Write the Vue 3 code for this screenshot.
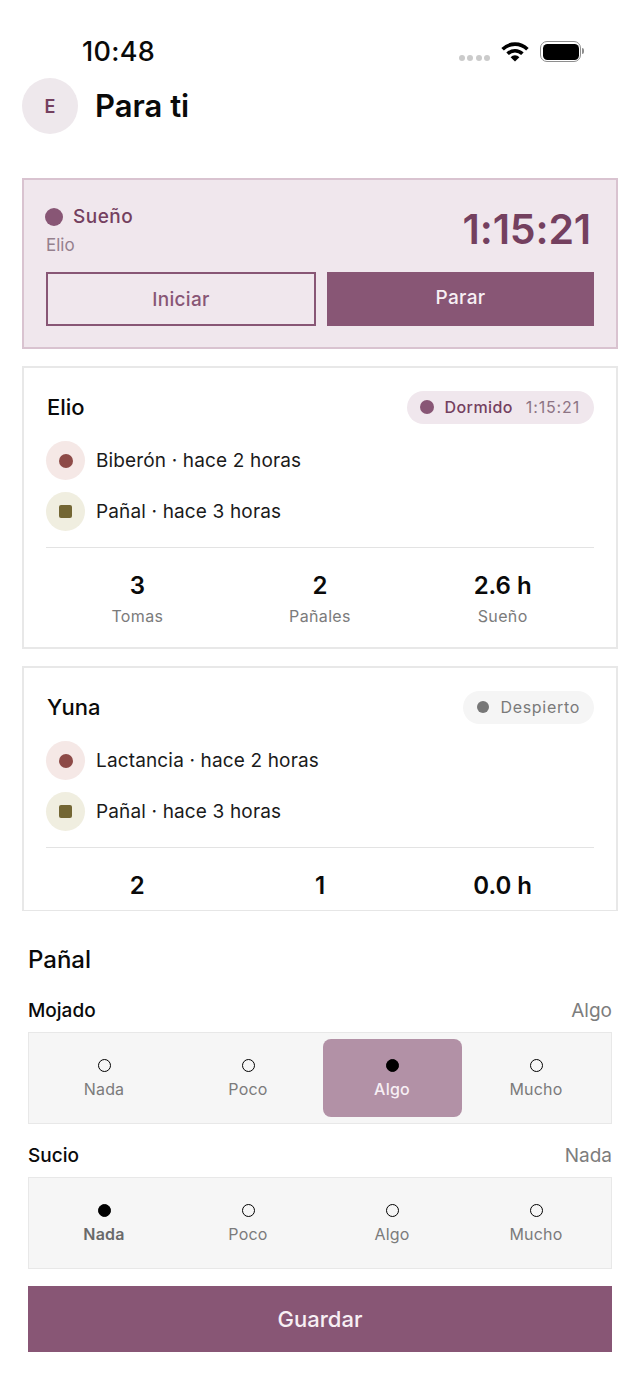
<template>
  <div class="screen">
    <div class="status-bar">
      <span class="clock">10:48</span>
      <div class="status-icons">
        <span class="signal"><i v-for="n in 4" :key="n"></i></span>
        <svg class="wifi" width="28" height="21" viewBox="0 0 28 21">
          <path d="M1.6 8.2a17.6 17.6 0 0 1 24.8 0" fill="none" stroke="#000" stroke-width="3.6" />
          <path d="M6.6 12.8a10.6 10.6 0 0 1 14.8 0" fill="none" stroke="#000" stroke-width="3.6" />
          <path d="M9.6 16.2a6.2 6.2 0 0 1 8.8 0L14 20.6z" fill="#000" />
        </svg>
        <span class="battery"><i></i></span>
        <span class="battery-cap"></span>
      </div>
    </div>

    <header class="top">
      <div class="avatar">E</div>
      <h1>Para ti</h1>
    </header>

    <main class="feed">
      <section class="timer-card">
        <div class="timer-head">
          <div>
            <div class="timer-kind"><span class="dot"></span>Sueño</div>
            <div class="timer-baby">Elio</div>
          </div>
          <div class="timer-time">1:15:21</div>
        </div>
        <div class="timer-actions">
          <button type="button" class="btn-outline">Iniciar</button>
          <button type="button" class="btn-solid">Parar</button>
        </div>
      </section>

      <section v-for="baby in babies" :key="baby.name" class="baby-card">
        <div class="baby-head">
          <h2>{{ baby.name }}</h2>
          <div class="pill" :class="{ asleep: baby.time }">
            <span class="pill-dot"></span>
            <span class="pill-label">{{ baby.status }}</span>
            <span v-if="baby.time" class="pill-time">{{ baby.time }}</span>
          </div>
        </div>
        <ul class="events">
          <li>
            <span class="ev-icon feed-ev"><i></i></span>
            {{ baby.feed }} · hace 2 horas
          </li>
          <li>
            <span class="ev-icon diaper-ev"><i></i></span>
            Pañal · hace 3 horas
          </li>
        </ul>
        <div class="stats">
          <div v-for="stat in baby.stats" :key="stat.label" class="stat">
            <strong>{{ stat.value }}</strong>
            <span>{{ stat.label }}</span>
          </div>
        </div>
      </section>
    </main>

    <section class="sheet">
      <h3>Pañal</h3>
      <div v-for="group in groups" :key="group.name" class="group">
        <div class="group-head">
          <span class="group-name">{{ group.name }}</span>
          <span class="group-value">{{ group.value }}</span>
        </div>
        <div class="segments">
          <div
            v-for="level in levels"
            :key="level"
            class="segment"
            :class="{ on: level === group.value, tinted: level === group.value && group.tinted }"
          >
            <span class="radio"></span>
            <span class="seg-label">{{ level }}</span>
          </div>
        </div>
      </div>
      <button type="button" class="save">Guardar</button>
    </section>
  </div>
</template>

<script setup>
const levels = ["Nada", "Poco", "Algo", "Mucho"];

const groups = [
  { name: "Mojado", value: "Algo", tinted: true },
  { name: "Sucio", value: "Nada", tinted: false },
];

const babies = [
  {
    name: "Elio",
    status: "Dormido",
    time: "1:15:21",
    feed: "Biberón",
    stats: [
      { value: "3", label: "Tomas" },
      { value: "2", label: "Pañales" },
      { value: "2.6 h", label: "Sueño" },
    ],
  },
  {
    name: "Yuna",
    status: "Despierto",
    time: "",
    feed: "Lactancia",
    stats: [
      { value: "2", label: "Tomas" },
      { value: "1", label: "Pañales" },
      { value: "0.0 h", label: "Sueño" },
    ],
  },
];
</script>

<style>
html,
body {
  background: #fff;
}
</style>

<style scoped>
.screen {
  width: 640px;
  height: 1391px;
  overflow: hidden;
  display: flex;
  flex-direction: column;
  background: #fff;
  color: #0a0a0a;
  font-family: Inter, "Liberation Sans", sans-serif;
}

.status-bar {
  height: 78px;
  flex: none;
  display: flex;
  justify-content: space-between;
  padding: 36px 56px 0 82px;
  box-sizing: border-box;
}

.clock {
  font-size: 27px;
  line-height: 31px;
  font-weight: 500;
  letter-spacing: 0.3px;
}

.status-icons {
  display: flex;
  align-items: flex-start;
  height: 31px;
}

.signal {
  display: flex;
  gap: 2.4px;
  margin-top: 19px;
  margin-right: 11px;
}

.signal i {
  width: 6px;
  height: 6px;
  border-radius: 50%;
  background: #cbcbcb;
}

.wifi {
  margin-top: 5px;
  margin-right: 11px;
}

.battery {
  width: 41px;
  height: 21px;
  margin-top: 5px;
  box-sizing: border-box;
  border: 1.5px solid #8e8e8e;
  border-radius: 7px;
  padding: 1.5px;
  display: flex;
}

.battery i {
  flex: 1;
  background: #000;
  border-radius: 4.5px;
}

.battery-cap {
  width: 2px;
  height: 6px;
  margin-top: 12px;
  margin-left: 1px;
  background: #8e8e8e;
  border-radius: 0 2px 2px 0;
}

.top {
  flex: none;
  height: 56px;
  display: flex;
  align-items: center;
  gap: 17px;
  padding-left: 22px;
}

.avatar {
  width: 56px;
  height: 56px;
  border-radius: 50%;
  background: #eee8ec;
  color: #74405f;
  font-size: 18px;
  font-weight: 600;
  display: flex;
  align-items: center;
  justify-content: center;
}

h1 {
  margin: 0 0 2px;
  font-size: 31px;
  font-weight: 600;
}

.feed {
  flex: 1;
  min-height: 0;
  overflow: hidden;
  margin: 44px 22px 0;
  border-bottom: 1px solid #e6e6e6;
  display: flex;
  flex-direction: column;
  gap: 17px;
}

.timer-card {
  flex: none;
  height: 171px;
  box-sizing: border-box;
  background: #f0e7ed;
  border: 2px solid #d9c3d0;
  padding: 24px 22px 0;
}

.timer-head {
  display: flex;
  justify-content: space-between;
  height: 68px;
}

.timer-kind {
  display: flex;
  align-items: center;
  gap: 10px;
  margin-left: -1px;
  font-size: 19px;
  line-height: 26px;
  font-weight: 500;
  letter-spacing: 0.5px;
  color: #74405f;
}

.dot {
  width: 18px;
  height: 18px;
  border-radius: 50%;
  background: #885675;
}

.timer-baby {
  margin-top: 4px;
  font-size: 17px;
  line-height: 22px;
  color: #95808d;
}

.timer-time {
  font-size: 41px;
  line-height: 50px;
  margin-top: 0;
  margin-right: 3px;
  font-weight: 600;
  letter-spacing: -0.15px;
  color: #74405f;
}

.timer-actions {
  display: flex;
  gap: 11px;
}

.timer-actions button {
  height: 54px;
  border-radius: 0;
  font: inherit;
  font-size: 19px;
  font-weight: 500;
  letter-spacing: 0.3px;
}

.btn-outline {
  width: 270px;
  background: transparent;
  border: 2px solid #885675;
  color: #885675;
}

.btn-solid {
  flex: 1;
  background: #885675;
  border: 0;
  color: #f7eff4;
  padding-bottom: 4px;
}

.baby-card {
  flex: none;
  height: 283px;
  box-sizing: border-box;
  border: 2px solid #e8e8e8;
  padding: 22px 22px 0;
}

.baby-head {
  display: flex;
  justify-content: space-between;
  align-items: center;
  height: 34px;
}

h2 {
  margin: 0 0 0 1px;
  font-size: 22px;
  font-weight: 500;
}

.pill {
  height: 33px;
  box-sizing: border-box;
  padding: 0 14px;
  border-radius: 17px;
  background: #f5f5f5;
  display: flex;
  align-items: center;
  font-size: 16px;
  letter-spacing: 0.7px;
  color: #7a7a7a;
}

.pill-dot {
  width: 12px;
  height: 12px;
  border-radius: 50%;
  background: #777;
  margin-right: 11px;
}

.pill-label {
  font-weight: 400;
}

.pill.asleep {
  background: #f0e7ed;
  color: #74405f;
  padding-left: 13px;
}

.pill.asleep .pill-label {
  font-weight: 500;
  letter-spacing: 0.4px;
}

.pill.asleep .pill-dot {
  width: 14px;
  height: 14px;
  background: #885675;
}

.pill-time {
  margin-left: 13px;
  letter-spacing: 0.85px;
  color: #8d7484;
}

.events {
  list-style: none;
  margin: 17px 0 0;
  padding: 0;
  display: flex;
  flex-direction: column;
  gap: 11.5px;
  height: 89.5px;
}

.events li {
  display: flex;
  align-items: center;
  gap: 11px;
  height: 39px;
  font-size: 19px;
  letter-spacing: 0.15px;
  color: #1a1a1a;
}

.ev-icon {
  width: 39px;
  height: 39px;
  border-radius: 50%;
  display: flex;
  align-items: center;
  justify-content: center;
  flex: none;
}

.feed-ev {
  background: #f5e8e6;
}

.feed-ev i {
  width: 14px;
  height: 14px;
  border-radius: 50%;
  background: #8d4a47;
}

.diaper-ev {
  background: #f0eee0;
}

.diaper-ev i {
  width: 13px;
  height: 13px;
  border-radius: 2px;
  background: #736634;
}

.stats {
  margin-top: 16px;
  border-top: 1px solid #e3e3e3;
  padding-top: 22px;
  display: grid;
  grid-template-columns: repeat(3, 1fr);
  text-align: center;
}

.stat strong {
  display: block;
  font-size: 24px;
  line-height: 32px;
  font-weight: 600;
}

.stat span {
  display: block;
  margin-top: 3px;
  font-size: 16px;
  line-height: 22px;
  letter-spacing: 0.35px;
  color: #7b7b7b;
}

.sheet {
  flex: none;
  height: 480px;
  box-sizing: border-box;
  padding: 33px 28px 0;
}

h3 {
  margin: 0;
  font-size: 24px;
  line-height: 32px;
  font-weight: 500;
}

.group {
  margin-top: 20px;
}

.group + .group {
  margin-top: 17px;
}

.group-head {
  display: flex;
  justify-content: space-between;
  align-items: center;
  height: 28px;
  font-size: 19px;
}

.group-name {
  font-weight: 500;
}

.group-value {
  color: #7d7d7d;
}

.segments {
  margin-top: 8px;
  height: 92px;
  box-sizing: border-box;
  background: #f6f6f6;
  border: 1px solid #e8e8e8;
  padding: 6px 5.5px;
  display: grid;
  grid-template-columns: repeat(4, 1fr);
  gap: 5px;
}

.segment {
  border-radius: 8px;
  display: flex;
  flex-direction: column;
  align-items: center;
  padding-top: 20px;
  box-sizing: border-box;
}

.radio {
  width: 13px;
  height: 13px;
  box-sizing: border-box;
  border: 1.5px solid #000;
  border-radius: 50%;
}

.seg-label {
  margin-top: 5px;
  font-size: 16px;
  line-height: 24px;
  letter-spacing: 0.2px;
  color: #7b7b7b;
}

.segment.on .radio {
  background: #000;
}

.segment.on .seg-label {
  font-weight: 600;
  color: #6a6a6a;
}

.segment.tinted {
  background: #b291a6;
}

.segment.tinted .seg-label {
  color: #f7eff4;
  font-weight: 500;
}

.save {
  display: block;
  width: 100%;
  height: 66px;
  margin-top: 17px;
  border: 0;
  border-radius: 0;
  background: #885675;
  color: #f7eff4;
  font: inherit;
  font-size: 22px;
  font-weight: 500;
}
</style>
